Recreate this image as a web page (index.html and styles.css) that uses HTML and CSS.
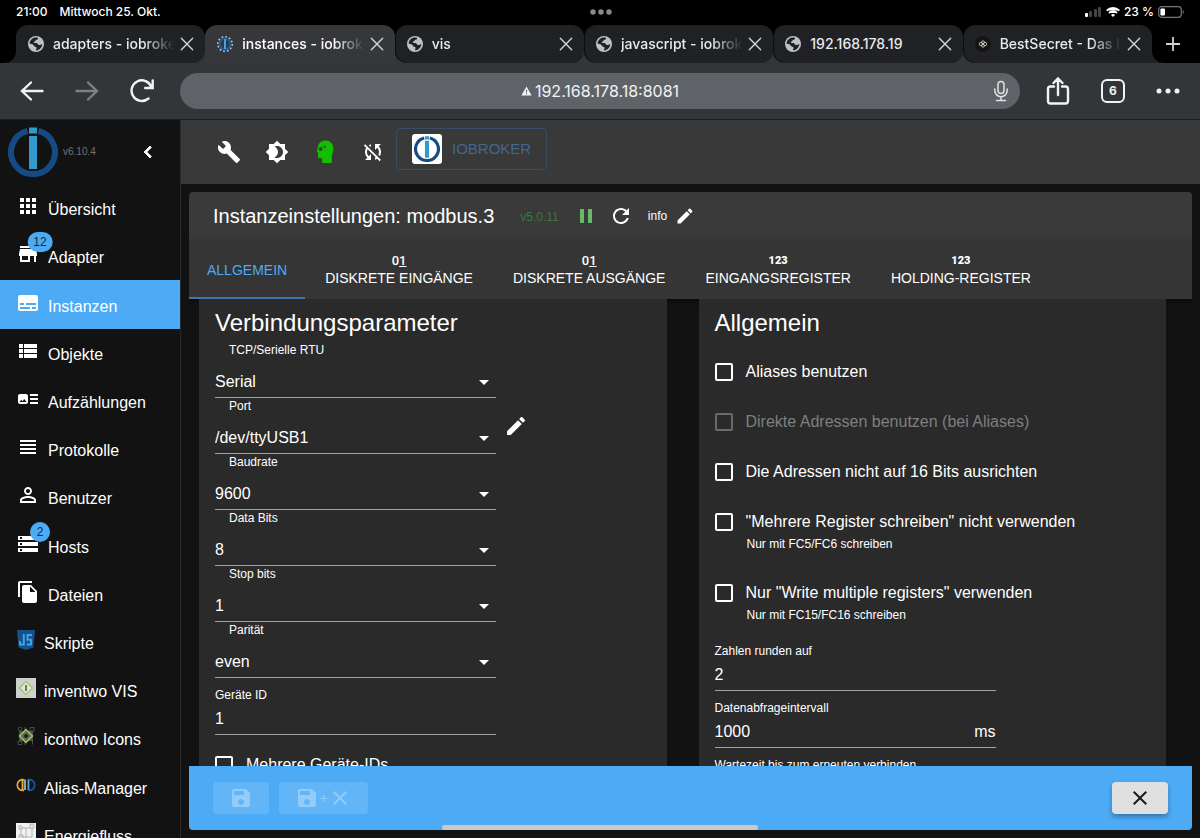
FILE: index.html
```html
<!DOCTYPE html>
<html lang="de">
<head>
<meta charset="utf-8">
<meta name="viewport" content="width=device-width, initial-scale=1">
<title>instances - iobroker</title>
<link rel="stylesheet" href="styles.css">
</head>
<body>
<svg class="sprite" aria-hidden="true">
  <symbol id="i-apps" viewBox="0 0 24 24"><path d="M4 8h4V4H4v4zm6 12h4v-4h-4v4zm-6 0h4v-4H4v4zm0-6h4v-4H4v4zm6 0h4v-4h-4v4zm6-10v4h4V4h-4zm-6 4h4V4h-4v4zm6 6h4v-4h-4v4zm0 6h4v-4h-4v4z"/></symbol>
  <symbol id="i-store" viewBox="0 0 24 24"><path d="M20 4H4v2h16V4zm1 10v-2l-1-5H4l-1 5v2h1v6h10v-6h4v6h2v-6h1zm-9 4H6v-4h6v4z"/></symbol>
  <symbol id="i-subtitles" viewBox="0 0 24 24"><path d="M20 4H4c-1.1 0-2 .9-2 2v12c0 1.1.9 2 2 2h16c1.1 0 2-.9 2-2V6c0-1.1-.9-2-2-2zM4 12h4v2H4v-2zm10 6H4v-2h10v2zm6 0h-4v-2h4v2zm0-4H10v-2h10v2z"/></symbol>
  <symbol id="i-list" viewBox="0 0 24 24"><path d="M3 14h4v-4H3v4zm0 5h4v-4H3v4zM3 9h4V5H3v4zm5 5h13v-4H8v4zm0 5h13v-4H8v4zM8 5v4h13V5H8z"/></symbol>
  <symbol id="i-art" viewBox="0 0 24 24"><path d="M22 13h-8v-2h8v2zm0-6h-8v2h8V7zm-8 10h8v-2h-8v2zm-2-8v6c0 1.1-.9 2-2 2H4c-1.1 0-2-.9-2-2V9c0-1.1.9-2 2-2h6c1.1 0 2 .9 2 2zm-1.5 6l-2.25-3-1.75 2.26-1.25-1.51L3.5 15h7z"/></symbol>
  <symbol id="i-lines" viewBox="0 0 24 24"><path d="M4 15h16v-2H4v2zm0 4h16v-2H4v2zm0-8h16V9H4v2zm0-6v2h16V5H4z"/></symbol>
  <symbol id="i-person" viewBox="0 0 24 24"><path d="M12 5.9c1.16 0 2.1.94 2.1 2.1s-.94 2.1-2.1 2.1S9.9 9.16 9.9 8s.94-2.1 2.1-2.1m0 9c2.97 0 6.1 1.46 6.1 2.1v1.1H5.9V17c0-.64 3.13-2.1 6.1-2.1M12 4C9.79 4 8 5.79 8 8s1.79 4 4 4 4-1.79 4-4-1.79-4-4-4zm0 9c-2.67 0-8 1.34-8 4v3h16v-3c0-2.66-5.33-4-8-4z"/></symbol>
  <symbol id="i-storage" viewBox="0 0 24 24"><path d="M2 20h20v-4H2v4zm2-3h2v2H4v-2zM2 4v4h20V4H2zm4 3H4V5h2v2zm-4 7h20v-4H2v4zm2-3h2v2H4v-2z"/></symbol>
  <symbol id="i-files" viewBox="0 0 24 24"><path d="M16 1H4c-1.1 0-2 .9-2 2v14h2V3h12V1zm-1 4l6 6v10c0 1.1-.9 2-2 2H7.99C6.89 23 6 22.1 6 21l.01-14c0-1.1.89-2 1.99-2h7zm-1 7h5.5L14 6.5V12z"/></symbol>
  <symbol id="i-wrench" viewBox="0 0 24 24"><path d="M22.7 19l-9.1-9.1c.9-2.3.4-5-1.5-6.9-2-2-5-2.4-7.4-1.3L9 6 6 9 1.6 4.7C.4 7.1.9 10.1 2.9 12.1c1.9 1.9 4.6 2.4 6.9 1.5l9.1 9.1c.4.4 1 .4 1.4 0l2.3-2.3c.5-.4.5-1.1.1-1.4z"/></symbol>
  <symbol id="i-theme" viewBox="0 0 24 24"><path d="M20 8.69V4h-4.69L12 .69 8.69 4H4v4.69L.69 12 4 15.31V20h4.69L12 23.31 15.31 20H20v-4.69L23.31 12 20 8.69zM12 18c-.89 0-1.74-.2-2.5-.55C11.56 16.5 13 14.42 13 12s-1.44-4.5-3.5-5.45C10.26 6.2 11.11 6 12 6c3.31 0 6 2.69 6 6s-2.69 6-6 6z"/></symbol>
  <symbol id="i-nosync" viewBox="0 0 24 24"><path d="M10 6.35V4.26c-.8.21-1.55.54-2.23.96l1.46 1.46c.25-.12.5-.24.77-.33zm-7.14-.94l2.36 2.36C4.45 8.99 4 10.44 4 12c0 2.21.91 4.2 2.36 5.64L4 20h6v-6l-2.24 2.24C6.68 15.15 6 13.66 6 12c0-1 .25-1.94.68-2.77l8.08 8.08c-.25.13-.5.25-.77.34v2.09c.8-.21 1.55-.54 2.23-.96l2.36 2.36 1.27-1.27L4.14 4.14 2.86 5.41zM20 4h-6v6l2.24-2.24C17.32 8.85 18 10.34 18 12c0 1-.25 1.94-.68 2.77l1.46 1.46C19.55 15.01 20 13.56 20 12c0-2.21-.91-4.2-2.36-5.64L20 4z"/></symbol>
  <symbol id="i-head" viewBox="0 0 24 24"><path fill="#13bd00" d="M12.7.6C8.300.6 5 3.600 4.700 7.800L3.900 11.600c-.1.700.4 1 1.100 1V16.600c0 1 .7 1.700 1.700 1.700H9.200V23h9.600v-7.500c1.100-1.700 1.500-3.500 1.500-7.200C20.300 3.800 17.100.6 12.700.6z"/><circle cx="7.600" cy="9" r="2" fill="#20522a"/><circle cx="11.600" cy="6.600" r="1.200" fill="#20522a"/></symbol>
  <symbol id="i-pause" viewBox="0 0 24 24"><path d="M6 19h4V5H6v14zm8-14v14h4V5h-4z"/></symbol>
  <symbol id="i-refresh" viewBox="0 0 24 24"><path d="M17.65 6.35C16.2 4.9 14.21 4 12 4c-4.42 0-7.99 3.58-7.99 8s3.57 8 7.99 8c3.73 0 6.84-2.55 7.73-6h-2.08c-.82 2.33-3.04 4-5.65 4-3.31 0-6-2.69-6-6s2.69-6 6-6c1.66 0 3.14.69 4.22 1.78L13 11h7V4l-2.35 2.35z"/></symbol>
  <symbol id="i-edit" viewBox="0 0 24 24"><path d="M3 17.25V21h3.75L17.81 9.94l-3.75-3.75L3 17.25zM20.71 7.04c.39-.39.39-1.02 0-1.41l-2.34-2.34c-.39-.39-1.02-.39-1.41 0l-1.83 1.83 3.75 3.75 1.83-1.83z"/></symbol>
  <symbol id="i-save" viewBox="0 0 24 24"><path d="M17 3H5c-1.11 0-2 .9-2 2v14c0 1.1.89 2 2 2h14c1.1 0 2-.9 2-2V7l-4-4zm-5 16c-1.66 0-3-1.34-3-3s1.34-3 3-3 3 1.34 3 3-1.34 3-3 3zm3-10H5V5h10v4z"/></symbol>
  <symbol id="i-close" viewBox="0 0 24 24"><path d="M19 6.41L17.59 5 12 10.59 6.41 5 5 6.41 10.59 12 5 17.59 6.41 19 12 13.41 17.59 19 19 17.59 13.41 12z"/></symbol>
  <symbol id="i-left" viewBox="0 0 24 24"><path d="M15.41 7.41L14 6l-6 6 6 6 1.41-1.41L10.83 12z" stroke="currentColor" stroke-width=".8"/></symbol>
  <symbol id="i-caret" viewBox="0 0 24 24"><path d="M7 10l5 5 5-5z"/></symbol>
  <symbol id="i-x" viewBox="0 0 16 16"><path d="M1.500 1.500l13 13M14.500 1.500l-13 13" fill="none" stroke="currentColor" stroke-width="1.600" stroke-linecap="round"/></symbol>
  <symbol id="i-globe" viewBox="0 0 16 16"><circle cx="8" cy="8" r="8" fill="#bdc1c6"/><path fill="#202124" d="M7 1.600c2.500-.4 3.600.3 3 1.300-.5.900-2.300.5-2.500 1.600-.2 1.200-1.800.7-1.900 1.700 0 1 2.700.4 3.700 1.200.9.700.7 1.600 1.900 1.700.9 0 1.700-.4 3.100-1.100-.2 3.300-2.700 6.200-6 6.400-.7-1.300.6-1.800.2-2.900-.3-.9-2.100-.6-2.600-1.800-.5-1-1.700-1.900-4.200-1.900C1.700 4.800 3.900 2.200 7 1.600z"/></symbol>
  <symbol id="i-iobroker" viewBox="0 0 50 50"><path d="M19.500 3.800A22 22 0 1 0 30.500 3.800" fill="none" stroke="#164a85" stroke-width="6"/><path fill="#3399cc" d="M21 .5h8v6h-8zM21 9h8v33h-8z"/></symbol>
</svg>

<header class="browser">
  <div class="status">
    <div class="status-left"><span>21:00</span><span>Mittwoch 25. Okt.</span></div>
    <svg class="multitask" viewBox="0 0 22 6" aria-hidden="true"><circle cx="3" cy="3" r="2.700"/><circle cx="11" cy="3" r="2.700"/><circle cx="19" cy="3" r="2.700"/></svg>
    <div class="status-right">
      <svg width="18" height="12" viewBox="0 0 18 12" aria-hidden="true"><rect x="1" y="7" width="3" height="4" rx="1" fill="#fff"/><rect x="5" y="5" width="3" height="6" rx="1" fill="#444"/><rect x="10" y="3" width="3" height="8" rx="1" fill="#444"/><rect x="14" y="1" width="3" height="10" rx="1" fill="#444"/></svg>
      <svg width="14" height="10" viewBox="0 0 14 10" fill="none" stroke="#fff" stroke-width="2" aria-hidden="true"><path d="M.7 3.600a9 9 0 0 1 12.600 0M3 6a5.700 5.700 0 0 1 8 0"/><path d="M7 10L5 8a3 3 0 0 1 4 0z" fill="#fff" stroke="none"/></svg>
      <span>23 %</span>
      <svg width="27" height="12" viewBox="0 0 27 12" aria-hidden="true"><rect x=".7" y=".7" width="22.600" height="10.600" rx="3" fill="none" stroke="#777" stroke-width="1.200"/><rect x="2.400" y="2.400" width="4.600" height="7.200" rx="1" fill="#fff"/><path d="M24.700 4v4c1.500-.6 1.500-3.400 0-4z" fill="#777"/></svg>
    </div>
  </div>

  <nav class="strip" aria-label="Tabs">
    <div class="strip-start"><span></span></div>
    <div class="tab"><svg class="fav"><use href="#i-globe"/></svg><span class="tab-title">adapters - iobroker</span><button class="tab-x" aria-label="Tab schließen"><svg><use href="#i-x"/></svg></button></div>
    <div class="tab tab-active"><svg class="fav" viewBox="0 0 16 16"><circle cx="8" cy="8" r="7.200" fill="none" stroke="#b9c7d6" stroke-width="1.600" stroke-dasharray="1.800 1.970"/><circle cx="8" cy="8" r="5.400" fill="none" stroke="#1d5b9c" stroke-width="2"/><path d="M7 3h2v10H7z" fill="#3fa5dc"/></svg><span class="tab-title">instances - iobroker</span><button class="tab-x" aria-label="Tab schließen"><svg><use href="#i-x"/></svg></button></div>
    <div class="tab"><svg class="fav"><use href="#i-globe"/></svg><span class="tab-title">vis</span><button class="tab-x" aria-label="Tab schließen"><svg><use href="#i-x"/></svg></button></div>
    <div class="tab"><svg class="fav"><use href="#i-globe"/></svg><span class="tab-title">javascript - iobroker</span><button class="tab-x" aria-label="Tab schließen"><svg><use href="#i-x"/></svg></button></div>
    <div class="tab"><svg class="fav"><use href="#i-globe"/></svg><span class="tab-title tab-short">192.168.178.19</span><button class="tab-x" aria-label="Tab schließen"><svg><use href="#i-x"/></svg></button></div>
    <div class="tab"><svg class="fav" viewBox="0 0 16 16"><circle cx="8" cy="8" r="8" fill="#151515"/><g fill="none" stroke="#d8d4cc" stroke-width=".8"><circle cx="8" cy="6.300" r="1.500"/><circle cx="8" cy="9.700" r="1.500"/><circle cx="6" cy="8" r="1.700"/><circle cx="10" cy="8" r="1.700"/></g></svg><span class="tab-title">BestSecret - Das b</span><button class="tab-x" aria-label="Tab schließen"><svg><use href="#i-x"/></svg></button></div>
    <div class="strip-end"><button class="new-tab" aria-label="Neuer Tab"><svg viewBox="0 0 16 16"><path d="M8 1v14M1 8h14" fill="none" stroke="#d0d3d6" stroke-width="1.800"/></svg></button></div>
  </nav>

  <div class="navbar">
    <button class="nav-btn" aria-label="Zurück"><svg viewBox="0 0 24 24"><path d="M22.500 12H2M11 3.500L2 12l9 8.500"/></svg></button>
    <button class="nav-btn nav-off" aria-label="Vorwärts" disabled><svg viewBox="0 0 24 24"><path d="M1.500 12H22M13 3.500l9 8.500-9 8.500"/></svg></button>
    <button class="nav-btn" aria-label="Neu laden"><svg viewBox="0 0 24 24"><path d="M18.500 19.500A10.300 10.300 0 1 1 21.500 8M22.700 1.500V9h-7.500"/></svg></button>
    <div class="url">
      <svg class="warn" viewBox="0 0 12 11" aria-hidden="true"><path fill="#f1f3f4" d="M6 .5L11.700 10.500H.3z"/><path fill="#5f6368" d="M5.400 4h1.200v3.200H5.400zM5.400 8h1.200v1.200H5.400z"/></svg>
      <span>192.168.178.18:8081</span>
      <button class="mic" aria-label="Sprachsuche"><svg viewBox="0 0 16 22"><rect x="5" y="1.500" width="6" height="12" rx="3"/><path d="M1.800 9v1.500a6.200 6.200 0 0 0 12.400 0V9M8 17v3.500M3.500 20.500h9"/></svg></button>
    </div>
    <button class="nav-btn nav-tall" aria-label="Teilen"><svg viewBox="0 0 24 28"><path d="M8 9.500H4.500a2.500 2.500 0 0 0-2.500 2.500v12a2.500 2.500 0 0 0 2.500 2.500h15a2.500 2.500 0 0 0 2.500-2.500V12a2.500 2.500 0 0 0-2.500-2.500H16M12 18V2M7.500 6L12 1.500 16.500 6"/></svg></button>
    <button class="tab-count" aria-label="6 Tabs">6</button>
    <button class="nav-btn" aria-label="Menü"><svg viewBox="0 0 24 24" class="dots"><circle cx="3" cy="12" r="2.500"/><circle cx="12" cy="12" r="2.500"/><circle cx="21" cy="12" r="2.500"/></svg></button>
  </div>
</header>

<div class="app">
  <aside class="side">
    <div class="brand">
      <svg class="brand-logo"><use href="#i-iobroker"/></svg>
      <span class="brand-ver">v6.10.4</span>
      <button class="icon-btn" aria-label="Menü einklappen"><svg class="ic"><use href="#i-left"/></svg></button>
    </div>
    <nav class="menu">
      <a href="#" class="item"><span class="item-ic"><svg class="ic"><use href="#i-apps"/></svg></span>Übersicht</a>
      <a href="#" class="item"><span class="item-ic"><svg class="ic"><use href="#i-store"/></svg><span class="badge">12</span></span>Adapter</a>
      <a href="#" class="item item-on"><span class="item-ic"><svg class="ic"><use href="#i-subtitles"/></svg></span>Instanzen</a>
      <a href="#" class="item"><span class="item-ic"><svg class="ic"><use href="#i-list"/></svg></span>Objekte</a>
      <a href="#" class="item"><span class="item-ic"><svg class="ic"><use href="#i-art"/></svg></span>Aufzählungen</a>
      <a href="#" class="item"><span class="item-ic"><svg class="ic"><use href="#i-lines"/></svg></span>Protokolle</a>
      <a href="#" class="item"><span class="item-ic"><svg class="ic"><use href="#i-person"/></svg></span>Benutzer</a>
      <a href="#" class="item"><span class="item-ic"><svg class="ic"><use href="#i-storage"/></svg><span class="badge">2</span></span>Hosts</a>
      <a href="#" class="item"><span class="item-ic"><svg class="ic"><use href="#i-files"/></svg></span>Dateien</a>
      <a href="#" class="item"><span class="item-ic"><svg class="pic" viewBox="0 0 20 20"><path fill="#17508a" d="M1 0h18l-1.600 17.600L10 20l-7.400-2.400z"/><path d="M7.800 4v10.500H4V11M16 5h-4.500v4.700H15v4.800h-4.300" fill="none" stroke="#3fa5e8" stroke-width="1.900"/></svg></span>Skripte</a>
      <a href="#" class="item"><span class="item-ic"><svg class="pic" viewBox="0 0 20 20"><path fill="#cfcfcf" d="M0 0h20v20H0z"/><path d="M10 3.500l6.500 6.500-6.500 6.500L3.500 10z" fill="#e4e4e4" stroke="#8fd14a" stroke-width="1.200"/><path d="M9.300 7h1.400v6H9.300z" fill="#444"/></svg></span>inventwo VIS</a>
      <a href="#" class="item"><span class="item-ic"><svg class="pic" viewBox="0 0 20 20"><g fill="none" stroke="#4a4a4a"><circle cx="4" cy="3" r="1.800"/><path d="M14 1.500h4v3.500h-4zM2 15.500h4v3H2zM16.500 14v4.500M9 1v3M9 16v3"/></g><path fill="#777" opacity=".6" d="M3 5h14v10H3z"/><path d="M10 3.500l6.500 6.500-6.500 6.500L3.500 10z" fill="#666" stroke="#9ccc4e" stroke-width="1.400"/><path d="M10 7.500l2.500 2.500-2.500 2.500L7.500 10z" fill="#222"/></svg></span>icontwo Icons</a>
      <a href="#" class="item"><span class="item-ic"><svg class="pic" viewBox="0 0 20 20"><g fill="none" stroke-width="1.700"><path d="M8 4.900A5.300 5.300 0 1 0 8 15.100" stroke="#e5a83a"/><path d="M12 4.900a5.300 5.300 0 1 1 0 10.200" stroke="#1d5596"/></g><path fill="#e5a83a" d="M5.600 4.500h1.900v10.500H5.600z"/><path fill="#dcdcdc" d="M8.300 4.500h1.400v10.500H8.300z"/><path fill="#3fa5dc" d="M11.500 4.500h1.900v10.500h-1.900z"/></svg></span>Alias-Manager</a>
      <a href="#" class="item"><span class="item-ic"><svg class="pic" viewBox="0 0 20 20"><path fill="#f2f2f2" d="M0 0h20v20H0z"/><path d="M3 3h3v3H3zM14 2h4v3h-4zM6 5h8M5 6v8h11V5M10 5v12M3 12h4v4H3z" fill="none" stroke="#a5a5a5" stroke-width=".8"/><path d="M13 1h5M2 3h3" stroke="#f0b0b0" fill="none"/></svg></span>Energiefluss</a>
    </nav>
  </aside>

  <main class="main">
    <div class="appbar">
      <button class="icon-btn" aria-label="Expertenmodus"><svg class="ic"><use href="#i-wrench"/></svg></button>
      <button class="icon-btn" aria-label="Farbschema"><svg class="ic"><use href="#i-theme"/></svg></button>
      <button class="icon-btn" aria-label="Expertenkopf"><svg class="ic"><use href="#i-head"/></svg></button>
      <button class="icon-btn" aria-label="Synchronisation"><svg class="ic"><use href="#i-nosync"/></svg></button>
      <button class="host"><span class="host-pic"><svg><use href="#i-iobroker"/></svg></span>IOBROKER</button>
    </div>

    <section class="paper">
      <div class="paper-head">
        <h1 class="title">Instanzeinstellungen: modbus.3</h1>
        <span class="ver">v5.0.11</span>
        <button class="icon-btn run" aria-label="Anhalten"><svg class="ic"><use href="#i-pause"/></svg></button>
        <button class="icon-btn" aria-label="Neustarten"><svg class="ic"><use href="#i-refresh"/></svg></button>
        <button class="log">info<svg class="ic-sm"><use href="#i-edit"/></svg></button>
      </div>

      <div class="tabs" role="tablist">
        <button class="ptab ptab-on" role="tab" aria-selected="true">ALLGEMEIN</button>
        <button class="ptab" role="tab"><span class="bits">0<u>1</u></span>DISKRETE EINGÄNGE</button>
        <button class="ptab" role="tab"><span class="bits">0<u>1</u></span>DISKRETE AUSGÄNGE</button>
        <button class="ptab" role="tab"><span class="nums">123</span>EINGANGSREGISTER</button>
        <button class="ptab" role="tab"><span class="nums">123</span>HOLDING-REGISTER</button>
      </div>

      <div class="content">
        <section class="card">
          <h2 class="card-title">Verbindungsparameter</h2>
          <div class="field"><label class="sel-label" for="type">TCP/Serielle RTU</label><div class="sel"><select id="type"><option>Serial</option></select><svg class="ic"><use href="#i-caret"/></svg></div></div>
          <div class="with-action">
            <div class="field"><label class="sel-label" for="port">Port</label><div class="sel"><select id="port"><option>/dev/ttyUSB1</option></select><svg class="ic"><use href="#i-caret"/></svg></div></div>
            <button class="icon-btn" aria-label="Port bearbeiten"><svg class="ic"><use href="#i-edit"/></svg></button>
          </div>
          <div class="field"><label class="sel-label" for="baud">Baudrate</label><div class="sel"><select id="baud"><option>9600</option></select><svg class="ic"><use href="#i-caret"/></svg></div></div>
          <div class="field"><label class="sel-label" for="data">Data Bits</label><div class="sel"><select id="data"><option>8</option></select><svg class="ic"><use href="#i-caret"/></svg></div></div>
          <div class="field"><label class="sel-label" for="stop">Stop bits</label><div class="sel"><select id="stop"><option>1</option></select><svg class="ic"><use href="#i-caret"/></svg></div></div>
          <div class="field"><label class="sel-label" for="parity">Parität</label><div class="sel"><select id="parity"><option>even</option></select><svg class="ic"><use href="#i-caret"/></svg></div></div>
          <div class="field"><label class="txt-label" for="dev">Geräte ID</label><div class="txt"><input id="dev" type="text" value="1"></div></div>
          <div class="checks">
            <label class="check"><input type="checkbox"><span>Mehrere Geräte-IDs</span></label>
          </div>
        </section>

        <section class="card">
          <h2 class="card-title">Allgemein</h2>
          <div class="checks">
            <label class="check"><input type="checkbox"><span>Aliases benutzen</span></label>
            <label class="check check-off"><input type="checkbox" disabled><span>Direkte Adressen benutzen (bei Aliases)</span></label>
            <label class="check"><input type="checkbox"><span>Die Adressen nicht auf 16 Bits ausrichten</span></label>
            <label class="check"><input type="checkbox"><span>"Mehrere Register schreiben" nicht verwenden</span><small>Nur mit FC5/FC6 schreiben</small></label>
            <label class="check"><input type="checkbox"><span>Nur "Write multiple registers" verwenden</span><small>Nur mit FC15/FC16 schreiben</small></label>
          </div>
          <div class="field"><label class="txt-label" for="round">Zahlen runden auf</label><div class="txt"><input id="round" type="text" value="2"></div></div>
          <div class="field"><label class="txt-label" for="poll">Datenabfrageintervall</label><div class="txt"><input id="poll" type="text" value="1000"><span>ms</span></div></div>
          <div class="field"><label class="txt-label" for="recon">Wartezeit bis zum erneuten verbinden</label><div class="txt"><input id="recon" type="text" value="60000"><span>ms</span></div></div>
        </section>
      </div>

      <footer class="actions">
        <button class="act" disabled aria-label="Speichern"><svg class="ic"><use href="#i-save"/></svg></button>
        <button class="act act-wide" disabled aria-label="Speichern und schließen"><svg class="ic"><use href="#i-save"/></svg><span>+</span><svg class="ic"><use href="#i-close"/></svg></button>
        <button class="act act-close" aria-label="Schließen"><svg class="ic"><use href="#i-close"/></svg></button>
      </footer>
    </section>
  </main>
</div>
<div class="home-bar"></div>
</body>
</html>
```

FILE: styles.css
```css
* { box-sizing: border-box; }

body {
  margin: 0;
  height: 100vh;
  display: flex;
  flex-direction: column;
  overflow: hidden;
  background: #121212;
  color: #fff;
  font: 16px/24px "Liberation Sans", Arial, sans-serif;
}

button {
  margin: 0;
  padding: 0;
  border: 0;
  background: none;
  color: inherit;
  font: inherit;
}

svg { display: block; fill: currentColor; }
.sprite { position: absolute; width: 0; height: 0; }
.ic { width: 24px; height: 24px; flex: none; }
.ic-sm { width: 20px; height: 20px; }
.icon-btn { display: flex; width: 24px; height: 24px; flex: none; }

/* Browser chrome */
.browser {
  flex: none;
  background: #000;
  border-bottom: 1px solid #1b1c1e;
  font-family: Inter, "Noto Sans", sans-serif;
}

.status {
  display: grid;
  grid-template-columns: 1fr auto 1fr;
  align-items: center;
  height: 25px;
  padding: 0 15px 2px 16px;
  font-size: 12px;
  line-height: 16px;
  font-weight: 500;
}
.status-left { display: flex; gap: 12px; }
.status-right { display: flex; gap: 4px; align-items: center; justify-content: flex-end; }
.multitask { width: 22px; height: 6px; fill: #8a8a8a; }

.strip {
  display: flex;
  height: 38px;
  background: linear-gradient(#000 50%, #323639 50%);
}
.strip-start { width: 16px; flex: none; background: linear-gradient(#000 50%, #202124 50%); }
.strip-start span { display: block; height: 100%; background: #000; border-bottom-right-radius: 12px; }
.strip-end { width: 48px; flex: none; background: linear-gradient(#000 50%, #202124 50%); }
.new-tab {
  display: flex;
  align-items: center;
  justify-content: center;
  width: 100%;
  height: 100%;
  padding-right: 6px;
  background: #000;
  border-bottom-left-radius: 12px;
}
.new-tab svg { width: 16px; height: 16px; }

.tab {
  flex: 1 1 0;
  min-width: 0;
  display: flex;
  align-items: center;
  gap: 9px;
  padding: 0 9px 0 12px;
  background: #202124;
  border-radius: 12px;
  box-shadow: inset 1px 0 #0c0c0d;
  color: #e8eaed;
  font-size: 14px;
  font-weight: 500;
}
.tab:nth-child(2) { border-bottom-left-radius: 0; box-shadow: none; }
.tab:nth-last-child(2) { border-bottom-right-radius: 0; }
.tab-active { background: #36373b; box-shadow: none; border-radius: 12px 12px 0 0; color: #fff; }
.fav { width: 16px; height: 16px; flex: none; }
.tab-title {
  flex: 1;
  min-width: 0;
  overflow: hidden;
  white-space: nowrap;
  -webkit-mask-image: linear-gradient(90deg, #000 75%, transparent);
  mask-image: linear-gradient(90deg, #000 75%, transparent);
}
.tab-short { -webkit-mask-image: none; mask-image: none; }
.tab-x { display: flex; justify-content: center; width: 18px; flex: none; margin-left: -5px; color: #d4d6d9; }
.tab-x svg { width: 14px; height: 14px; }

.navbar {
  display: flex;
  align-items: center;
  gap: 31px;
  height: 56px;
  padding: 0 20px;
  background: #323639;
  color: #f1f3f4;
}
.nav-btn svg { width: 24px; height: 24px; fill: none; stroke: currentColor; stroke-width: 2.4; stroke-linecap: round; }
.nav-btn .dots { fill: currentColor; stroke: none; }
.nav-tall svg { height: 28px; }
.nav-off { color: #7d8083; }
.url {
  flex: 1;
  display: grid;
  grid-template-columns: 1fr auto auto 1fr;
  align-items: center;
  column-gap: 3px;
  height: 36px;
  padding: 0 11px;
  margin: 0 -5px;
  border-radius: 18px;
  background: #5f6368;
  font-size: 16px;
}
.warn { width: 11px; height: 10px; grid-column: 2; }
.mic { justify-self: end; }
.mic svg { width: 16px; height: 22px; fill: none; stroke: #e0e2e4; stroke-width: 1.5; stroke-linecap: round; }
.tab-count {
  width: 24px;
  height: 24px;
  border: 2px solid currentColor;
  border-radius: 6px;
  font-size: 12px;
  line-height: 20px;
  font-weight: 700;
}

/* Application frame */
.app { flex: 1; min-height: 0; display: flex; }
.side { width: 181px; flex: none; overflow: hidden; border-right: 1px solid #2b2b2b; }
.brand { display: flex; align-items: center; height: 64px; padding: 0 20px 0 8px; }
.brand-logo { width: 50px; height: 50px; }
.brand-ver { flex: 1; padding-left: 5px; color: #717171; font-size: 10px; }

.menu { display: grid; grid-auto-rows: 1fr; height: 675px; }
.item { display: flex; align-items: center; gap: 8px; padding: 4px 16px 0; color: #fff; text-decoration: none; }
.item-on { background: #4dabf5; }
.item-ic { position: relative; margin-bottom: 8px; }
.pic { width: 20px; height: 20px; }
.badge {
  position: absolute;
  top: 0;
  right: 0;
  transform: translate(50%, -50%);
  min-width: 20px;
  padding: 0 6px;
  border-radius: 10px;
  background: #4dabf5;
  color: #1b2a36;
  font-size: 12px;
  line-height: 20px;
  text-align: center;
}

.main { flex: 1; min-width: 0; display: flex; flex-direction: column; }
.appbar { display: flex; align-items: center; gap: 24px; height: 64px; flex: none; padding: 0 36px; background: #393939; }
.host {
  display: flex;
  align-items: center;
  gap: 10px;
  height: 42px;
  margin: -6px 0 0 -13px;
  padding: 0 15px;
  border: 1px solid #374c66;
  border-radius: 4px;
  color: #446690;
  font-size: 15px;
}
.host-pic { padding: 2px; border-radius: 3px; background: #fff; }
.host-pic svg { width: 26px; height: 26px; }

.paper { flex: 1; min-height: 0; display: flex; flex-direction: column; margin: 8px; border-radius: 4px; overflow: hidden; }
.paper-head { display: flex; align-items: center; gap: 11px; height: 48px; flex: none; padding: 0 24px; background: #3a3a3a; }
.title { margin: 0; font-size: 20px; line-height: 32px; font-weight: 400; }
.ver { padding: 2px 4px 0 15px; color: #357a38; font-size: 12px; }
.run { color: #66bb6a; }
.log { display: flex; align-items: center; gap: 8px; padding-left: 4px; font-size: 12px; }

.tabs { display: flex; height: 59px; flex: none; background: #353535; box-shadow: 0 2px 4px rgba(0, 0, 0, .5); }
.ptab {
  display: flex;
  flex-direction: column;
  align-items: center;
  justify-content: center;
  padding: 3px 20px 0;
  border-bottom: 2px solid transparent;
  font-size: 14px;
  line-height: 18px;
  white-space: nowrap;
}
.ptab-on { padding: 2px 18px 0; border-bottom-color: #3d77b0; color: #4dabf5; }
.bits, .nums { font-family: Roboto, sans-serif; font-weight: 500; font-size: 13px; line-height: 16px; }
.nums { font-size: 11px; font-weight: 900; }

.content { flex: 1; min-height: 0; overflow: hidden; display: grid; grid-template-columns: 1fr 1fr; gap: 32px; padding: 0 26px 0 10px; }
.card { padding: 8px 16px; background: #2a2a2a; }
.card-title { margin: 0; padding-bottom: 3px; font-size: 24px; line-height: 32px; font-weight: 400; }

.field { width: 281px; max-width: 100%; }
.with-action { display: flex; align-items: center; gap: 8px; }
.sel-label { display: block; padding-left: 14px; font-size: 12px; line-height: 16px; }
.txt-label { display: block; padding-top: 9px; font-size: 12px; line-height: 16px; }
.sel { display: grid; grid-template-columns: 1fr 24px; align-items: center; height: 40px; border-bottom: 1px solid #a3a3a3; padding-top: 8px; }
.sel select {
  grid-area: 1 / 1 / 2 / 3;
  width: 100%;
  height: 31px;
  padding: 0;
  appearance: none;
  border: 0;
  background: none;
  color: #fff;
  font: inherit;
}
.sel svg { grid-area: 1 / 2 / 2 / 3; pointer-events: none; }
.txt { display: flex; align-items: center; height: 32px; border-bottom: 1px solid #a3a3a3; }
.txt input { flex: 1; min-width: 0; height: 31px; padding: 0; border: 0; outline: 0; background: none; color: #fff; font: inherit; }

.checks { display: grid; gap: 26px; margin: 18px 0 8px; }
.check { display: grid; grid-template-columns: 18px 1fr; column-gap: 13px; align-items: center; }
.check input { appearance: none; width: 18px; height: 18px; margin: 0; border: 2px solid #fff; border-radius: 2px; }
.check small { grid-column: 2; padding-left: 1px; font-size: 12px; line-height: 21px; }
.check-off { color: #7f7f7f; }
.check-off input { border-color: #6a6a6a; }

.actions { display: flex; align-items: center; gap: 10px; height: 64px; flex: none; padding: 0 24px; background: #4dabf5; }
.act { display: flex; align-items: center; justify-content: center; min-width: 56px; height: 32px; border-radius: 4px; background: #62b5f6; color: #93ccf9; }
.act-wide { padding: 0 16px; }
.act-wide span { width: 9px; font-size: 14px; }
.act-close { margin-left: auto; background: #e0e0e0; color: #1a1a1a; box-shadow: 0 3px 5px rgba(0, 0, 0, .3); }

.home-bar { position: fixed; left: 50%; bottom: 8px; width: 316px; height: 5px; transform: translateX(-50%); border-radius: 3px; background: #c9c9c9; }
```
